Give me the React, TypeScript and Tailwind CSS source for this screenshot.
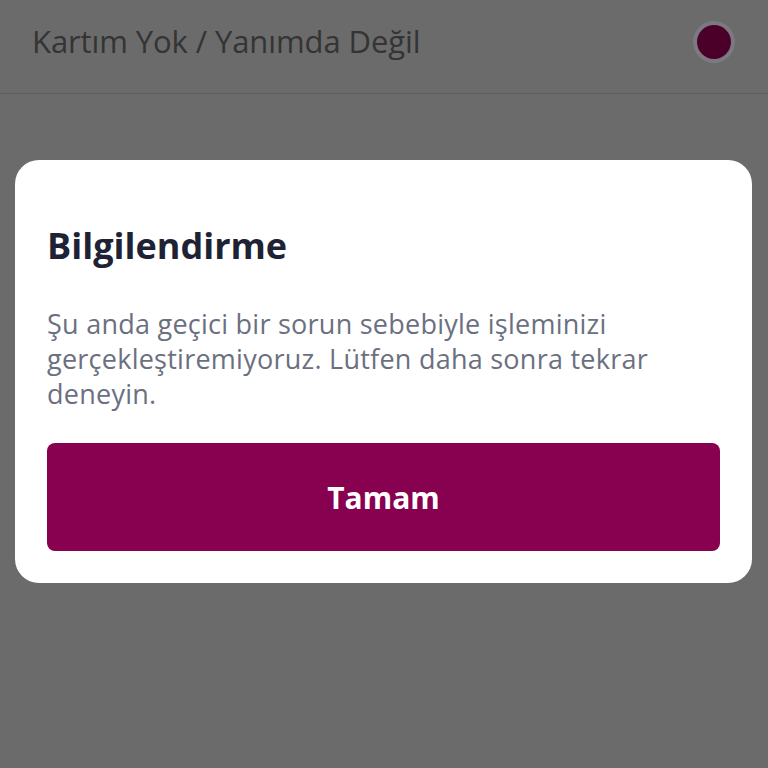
import React from "react";

export default function App() {
  return (
    <div
      className="w-[768px] h-[768px] bg-[#6b6b6b] flex flex-col overflow-hidden"
      style={{ fontFamily: "'Open Sans', 'Noto Sans', sans-serif" }}
    >
      <div className="h-[94px] flex items-center justify-between pl-[32px] pr-[33px] border-b border-[#5e5e5e] shrink-0">
        <span className="text-[31px] text-[#343434] tracking-[-0.1px] pb-[10px]">Kartım Yok / Yanımda Değil</span>
        <div className="w-[42px] h-[42px] rounded-full bg-[#7a7a80] flex items-center justify-center mb-[10px]">
          <div className="w-[34px] h-[34px] rounded-full bg-[#4a0029]" />
        </div>
      </div>
      <div className="px-[15px] pt-[66px]">
        <div className="bg-white rounded-[24px] w-[737px] px-[32px] pt-[64px] pb-[32px] flex flex-col">
          <h1 className="text-[36px] font-bold text-[#1e2235] leading-[44px]">Bilgilendirme</h1>
          <p className="mt-[38px] text-[27px] leading-[35px] tracking-[0.25px] text-[#6b7080]">
            Şu anda geçici bir sorun sebebiyle işleminizi gerçekleştiremiyoruz. Lütfen daha sonra tekrar deneyin.
          </p>
          <button className="mt-[32px] h-[108px] w-full rounded-[8px] bg-[#880050] text-white text-[30px] font-bold">
            Tamam
          </button>
        </div>
      </div>
    </div>
  );
}
